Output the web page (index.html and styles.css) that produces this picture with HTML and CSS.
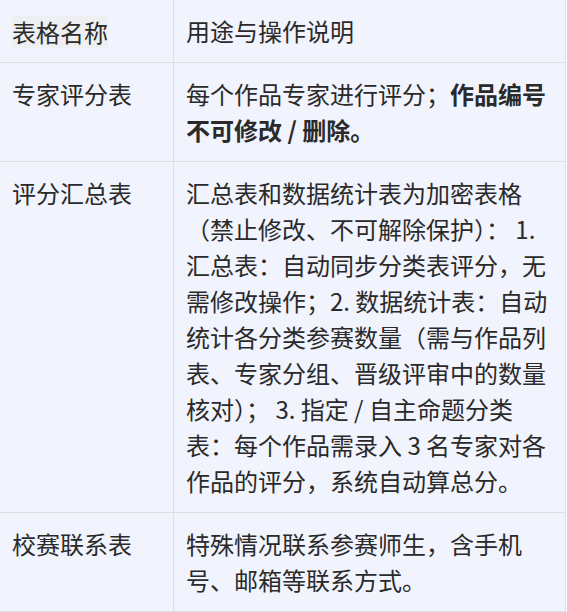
FILE: index.html
```html
<!DOCTYPE html>
<html lang="zh-CN">
<head>
<meta charset="utf-8">
<title>表格说明</title>
<link rel="stylesheet" href="styles.css">
</head>
<body>
<table class="guide">
  <colgroup>
    <col class="col-name">
    <col class="col-desc">
  </colgroup>
  <thead>
    <tr>
      <th><span class="hl">表格名称</span></th>
      <th>用途与操作说明</th>
    </tr>
  </thead>
  <tbody>
    <tr>
      <td>专家评分表</td>
      <td>每个作品专家进行评分；<strong>作品编号不可修改 / 删除。</strong></td>
    </tr>
    <tr>
      <td>评分汇总表</td>
      <td>汇总表和数据统计表为加密表格（禁止修改、不可解除保护）： 1. 汇总表：自动同步分类表评分，无需修改操作；2. 数据统计表：自动统计各分类参赛数量（需与作品列表、专家分组、晋级评审中的数量核对）； 3. 指定 / 自主命题分类表：每个作品需录入 3 名专家对各作品的评分，系统自动算总分。</td>
    </tr>
    <tr>
      <td>校赛联系表</td>
      <td>特殊情况联系参赛师生，含手机号、邮箱等联系方式。</td>
    </tr>
  </tbody>
</table>
</body>
</html>
```
FILE: styles.css
```css
html, body {
  margin: 0;
  padding: 0;
  background: #ffffff;
}

body {
  font-family: "Noto Sans CJK SC", "Noto Sans", sans-serif;
  color: #2a2a2a;
}

.guide {
  border-collapse: collapse;
  table-layout: fixed;
  width: 566px;
  margin: -1px 0 0 -1px;
  background: #f1f3fd;
  font-size: 24px;
  line-height: 36px;
}

.col-name {
  width: 174px;
}

.col-desc {
  width: 392px;
}

.guide th,
.guide td {
  border: 1px solid #dcdfe6;
  padding: 13px 12px 13px 12px;
  text-align: left;
  vertical-align: top;
  font-weight: 400;
}

.guide strong {
  font-weight: 700;
}

.hl {
  display: inline-block;
  height: 32px;
  line-height: 32px;
  vertical-align: top;
  margin-top: 3px;
  background: #eeeff1;
}
```
